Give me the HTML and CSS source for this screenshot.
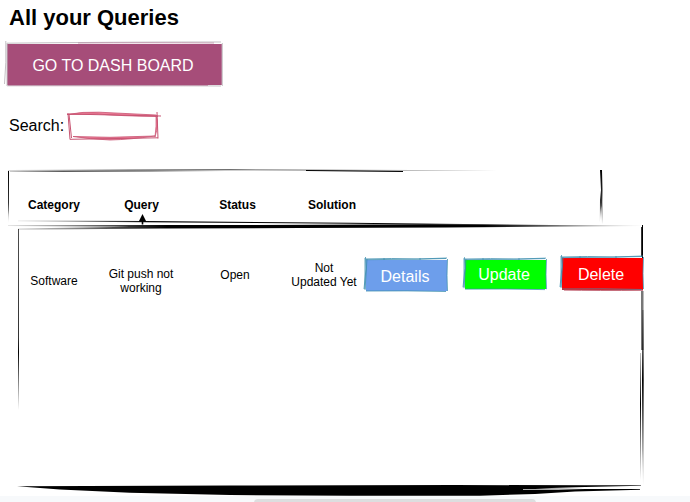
FILE: index.html
```html
<!DOCTYPE html>
<html lang="en">
<head>
<meta charset="utf-8">
<title>All your Queries</title>
<link rel="stylesheet" href="styles.css">
</head>
<body>
<main class="page">
  <h1 class="title">All your Queries</h1>
  <button class="dash" type="button">GO TO DASH BOARD
    <svg class="sketch" viewBox="7 44 215 41" fill="none" stroke-width="1">
      <path stroke="#c4c0c4" d="M7 43.200Q110 42 221 42M5.800 41Q6.500 62 4.500 84M7 43V86M7 85.800Q110 85 221 86M222.300 43V86"/>
      <path stroke="#b9819d" stroke-width=".7" d="M78 43Q150 42.500 214 43M8 85.500Q100 86.200 208 85.500M221.500 44V85"/>
    </svg>
  </button>
  <label class="search"><span>Search:</span>
    <span class="field"><input class="input" type="text">
      <svg class="sketch" viewBox="68 113 90 26" fill="none" stroke="#c85472">
        <path fill="#ef809a" stroke-width=".8" d="M67 114.500Q83 111.500 99 112.200L156 115L158 116.500Q120 116 98 114Z"/>
        <path fill="#ef809a" stroke-width=".8" d="M73 136.500L110 137.300L155 136Q130 139.500 110 140Q89 139 73 136.500Z"/>
        <path fill="#ef809a" stroke-width=".7" d="M156 116Q159.500 123 155 137Q156.500 126 156 116Z"/>
        <path stroke-width="1" d="M68 113.500L70 139.500M69 114L71.500 138M67 114L161 116M157 112L158 138.500M70 139.300L158 137.800"/>
      </svg>
    </span>
  </label>
  <section class="table">
    <div class="row head">
      <svg class="sketch" viewBox="8 170 594 55">
        <defs>
          <linearGradient id="inOut"><stop stop-opacity=".2"/><stop offset=".25" stop-opacity=".8"/><stop offset=".65" stop-opacity=".7"/><stop offset="1" stop-opacity="0"/></linearGradient>
          <linearGradient id="rule"><stop stop-opacity=".1"/><stop offset=".25"/><stop offset=".75"/><stop offset="1" stop-opacity="0"/></linearGradient>
          <linearGradient id="down" x2="0" y2="1"><stop/><stop offset=".6" stop-opacity=".8"/><stop offset="1" stop-opacity="0"/></linearGradient>
        </defs>
        <path fill="url(#inOut)" d="M8 170L230 169.300L497 170.200V171L230 170.300L8 170.800Z"/>
        <path fill="url(#inOut)" d="M10 171.100L225 170.500V171.300L10 172.100Z"/>
        <path d="M306 170L403 171V171.900L306 171Z"/>
        <path fill="url(#down)" d="M8 171H9V224L8 210Z"/>
        <path fill="url(#down)" d="M600 170H602L602.500 190L602.300 202L602.900 224H602L601.200 206L599.800 223L600 200L601 190Z"/>
        <path fill="url(#rule)" d="M18 220.500L145 221L350 222.700L560 225V225.800L350 223.700L145 222.200L18 221.300Z"/>
      </svg>
      <span class="cell">Category</span><span class="cell">Query
        <svg class="arrow" viewBox="0 0 9 11"><path d="M4.500 0L8.500 8L5.300 7V10.500H3.700V7L.5 8Z"/></svg></span><span class="cell">Status</span><span class="cell">Solution</span>
    </div>
    <div class="body">
      <svg class="sketch" viewBox="18 225 625 269">
        <defs>
          <linearGradient id="fadeDown" x2="0" y2="1"><stop stop-opacity=".7"/><stop offset=".6" stop-opacity=".8"/><stop offset=".68"/><stop offset="1" stop-opacity="0"/></linearGradient>
          <linearGradient id="fadeLow" x2="0" y2="1"><stop stop-opacity=".25"/><stop offset=".4"/><stop offset="1" stop-opacity="0"/></linearGradient>
        </defs>
        <path fill="url(#rule)" d="M8 225L230 225L430 224.300L643 225.500V226L445 227.500L300 228L160 228.500L18 229.700V228.500L130 226.800L8 225.900Z"/>
        <path fill="url(#fadeDown)" d="M18 229H19V410H18Z"/>
        <path d="M642 225H643V290H642Z"/>
        <path fill="#333" d="M641 227H642V257H641Z"/>
        <path fill="#777" d="M641 291H643.500V350H641Z"/>
        <path fill="url(#fadeLow)" d="M642 310H643.700V485H643L642 450Z"/>
        <path fill="url(#fadeLow)" d="M640 353H641V480H640Z"/>
        <path d="M17 486.200L230 485.500L455 485L585 485.300L641 485.300V485.800L585 487L535 488.600L585 489L640 489.100V489.700L575 491.500L535 494L480 495.700L350 495.700L230 495L130 492.700L60 489.500Z"/>
        <path fill="#aaa" d="M523 489H558L585 489.500L558 489.900H523Z"/>
      </svg>
      <div class="row record">
        <span class="cell category">Software</span>
        <span class="cell query">Git push not<br>working</span>
        <span class="cell status">Open</span>
        <span class="cell solution">Not<br>Updated Yet</span>
        <button class="action details" type="button">Details<svg class="sketch" viewBox="0 0 81 31"><use href="#box"/></svg></button>
        <button class="action update" type="button">Update<svg class="sketch" viewBox="0 0 81 29"><use href="#box" transform="scale(1 .94)"/></svg></button>
        <button class="action delete" type="button">Delete<svg class="sketch" viewBox="0 0 81 32">
          <defs><g id="box" fill="none" stroke="#3d8eaf" stroke-width=".8"><path d="M-2 -1Q26 -2 52 -1L81 -2M0 -.3L48 -.8L80 -1.500M-.5 -3L0 9L-2 29M-1 0V29M1 -1L-1 30M81.500 -1Q80.500 16 81.500 31M0 31Q42 30.500 80 31.500M18 -2V0M54 -2V0"/></g></defs>
          <use href="#box"/><path d="M2 32Q36 32.500 81 32.200" fill="none" stroke="#b84a5c"/></svg></button>
      </div>
    </div>
  </section>
  <footer class="scrollbar"><div class="thumb"></div></footer>
</main>
</body>
</html>
```
FILE: styles.css
```css
* { box-sizing: border-box; }
body { margin: 0; background: #fff; color: #000; font-family: "Liberation Sans", Arial, sans-serif; font-size: 16px; }
.page { display: flex; flex-direction: column; align-items: flex-start; width: 690px; height: 502px; overflow: hidden; }
.title { margin: 5px 0 0 9px; font-size: 22px; line-height: 25px; }
button { position: relative; border: 0; border-radius: 0; color: #fff; font: inherit; }
.sketch { position: absolute; inset: 0; width: 100%; height: 100%; overflow: visible; pointer-events: none; }
.dash { width: 215px; height: 41px; margin: 14px 0 0 7px; padding: 2px 3px 0 0; background: #a64d79; }
.search { display: flex; align-items: center; gap: 4px; height: 26px; margin: 28px 0 0 9px; }
.field { position: relative; display: block; width: 90px; height: 26px; }
.input { display: block; width: 100%; height: 100%; padding: 4px 8px; border: 0; background: transparent; font: inherit; }
.table { margin-top: 31px; font-size: 12px; line-height: 14px; }
.row { display: grid; }
.cell { position: relative; text-align: center; white-space: nowrap; }
.head { position: relative; grid-template-columns: 92px 83px 109px 80px; width: 594px; height: 55px; margin-left: 8px; padding-top: 28px; font-weight: bold; }
.arrow { position: absolute; left: 38px; top: 16px; width: 9px; height: 11px; }
.body { position: relative; width: 625px; height: 269px; margin-left: 18px; }
.record { grid-template-columns: 72px 102px 86px 88px 99px 97px 81px; align-items: start; padding-top: 33px; }
.category { margin-top: 16px; }
.query { margin-top: 9px; }
.status { margin-top: 10px; }
.solution { margin-top: 3px; padding-left: 4px; }
.action { width: 81px; padding: 0 3px 0 0; font-size: 16px; }
.details { height: 31px; margin-top: 2px; padding-top: 2px; background: #6d9eeb; }
.update { height: 29px; margin-top: 2px; background: #0f0; }
.delete { height: 32px; padding-top: 1px; background: #f00; }
.scrollbar { width: 690px; height: 6px; margin-top: 2px; padding: 3px 0 0 254px; background: #f7f9fb; }
.thumb { width: 282px; height: 8px; border-radius: 4px; background: #dcdedf; }
```
